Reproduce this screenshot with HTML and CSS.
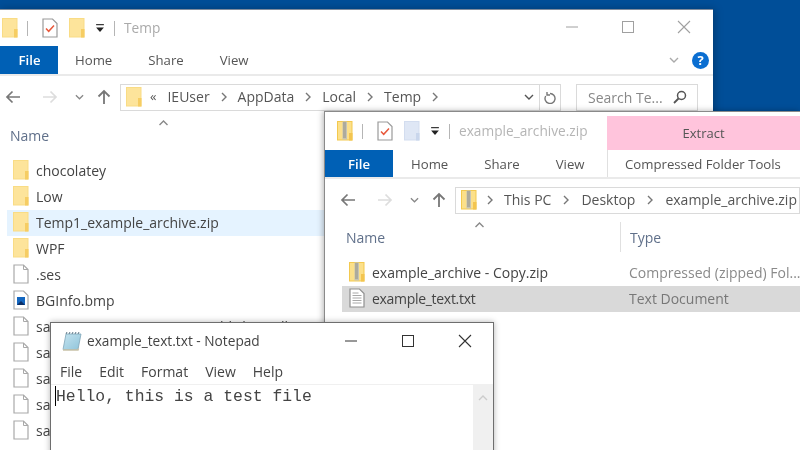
FILE: index.html
```html
<!DOCTYPE html>
<html lang="en">
<head>
<meta charset="utf-8">
<title>Temp</title>
<link rel="stylesheet" href="styles.css">
</head>
<body>
<svg class="defs" width="0" height="0" aria-hidden="true">
  <defs>
    <linearGradient id="pad-fill" x1="0" y1="0" x2="1" y2="1">
      <stop offset="0" stop-color="#c4e3ef"/>
      <stop offset="1" stop-color="#8fc4da"/>
    </linearGradient>
    <symbol id="folder" viewBox="0 0 16 20">
      <rect x="0.500" y="0.500" width="14.500" height="18.500" fill="#fde49b" stroke="#f9dc85"/>
      <rect x="12" y="11" width="3.500" height="8.500" fill="#f6cd63"/>
    </symbol>
    <symbol id="folder-blue" viewBox="0 0 16 20">
      <rect x="0.500" y="0.500" width="14.500" height="18.500" fill="#dfe7f5" stroke="#d3ddef"/>
      <rect x="12" y="12" width="3.500" height="7.500" fill="#c9d6ec"/>
    </symbol>
    <symbol id="zip" viewBox="0 0 16 20">
      <rect x="0.500" y="0.500" width="14.500" height="18.500" fill="#fce08a" stroke="#f3c94f"/>
      <rect x="5.500" y="0.500" width="4.500" height="18" fill="#c6c4b6"/>
      <path d="M6 2h3M6 4h3M6 6h3M6 8h3M6 10h3M6 12h3M6 14h3M6 16h3" stroke="#8e8d80" stroke-width="0.900"/>
      <rect x="12" y="12" width="3.500" height="7.500" fill="#f3c550"/>
    </symbol>
    <symbol id="page" viewBox="0 0 16 20">
      <path d="M1 1h9.500L15 5.500V19H1z" fill="#fff" stroke="#a9a9a9" stroke-width="1.200"/>
      <path d="M10.500 1v4.500H15" fill="none" stroke="#a9a9a9"/>
    </symbol>
    <symbol id="textfile" viewBox="0 0 16 20">
      <path d="M1 1h9.500L15 5.500V19H1z" fill="#fff" stroke="#8f8f8f" stroke-width="1.200"/>
      <path d="M3.500 5h6M3.500 7.500h9M3.500 10h9M3.500 12.500h9M3.500 15h9" stroke="#a8a8a8"/>
    </symbol>
    <symbol id="props" viewBox="0 0 16 20">
      <path d="M1 1h9.500L15 5.500V19H1z" fill="#fff" stroke="#9a9a9a" stroke-width="1.200"/>
      <path d="M4 10.500l2.700 2.800L12 7.500" fill="none" stroke="#e8593c" stroke-width="1.500"/>
    </symbol>
    <symbol id="bitmap" viewBox="0 0 16 20">
      <path d="M1 1h9.500L15 5.500V19H1z" fill="#fff" stroke="#a9a9a9" stroke-width="1.200"/>
      <rect x="4" y="7" width="8" height="8" fill="#1467c0"/>
      <path d="M4 15l4-4 4 4z" fill="#0c2f66"/>
    </symbol>
    <symbol id="back" viewBox="0 0 16 14">
      <path d="M15 7H2M7.500 1.500L2 7l5.500 5.500" fill="none" stroke="currentColor" stroke-width="1.700"/>
    </symbol>
    <symbol id="forward" viewBox="0 0 16 14">
      <path d="M1 7h13M8.500 1.500L14 7l-5.500 5.500" fill="none" stroke="currentColor" stroke-width="1.700"/>
    </symbol>
    <symbol id="up" viewBox="0 0 14 16">
      <path d="M7 15V2M1.500 7.500L7 2l5.500 5.500" fill="none" stroke="currentColor" stroke-width="1.800"/>
    </symbol>
    <symbol id="chev-down" viewBox="0 0 10 6">
      <path d="M1 1l4 4 4-4" fill="none" stroke="currentColor" stroke-width="1.400"/>
    </symbol>
    <symbol id="chev-right" viewBox="0 0 6 10">
      <path d="M1 1l4 4-4 4" fill="none" stroke="currentColor" stroke-width="1.400"/>
    </symbol>
    <symbol id="qat-drop" viewBox="0 0 9 9">
      <path d="M1 1.500h7" stroke="#222" stroke-width="1"/>
      <path d="M1 4h7L4.500 8z" fill="#222"/>
    </symbol>
    <symbol id="min" viewBox="0 0 14 14"><path d="M1 7h12" stroke="currentColor" stroke-width="1"/></symbol>
    <symbol id="max" viewBox="0 0 14 14"><rect x="1.500" y="1.500" width="11" height="11" fill="none" stroke="currentColor"/></symbol>
    <symbol id="close" viewBox="0 0 14 14"><path d="M1 1l12 12M13 1L1 13" stroke="currentColor" stroke-width="1.100"/></symbol>
    <symbol id="notepad" viewBox="0 0 20 20">
      <path d="M4 3h15l-3 15.500H1z" fill="url(#pad-fill)" stroke="#7fa5b8" stroke-width="0.800"/>
      <path d="M4 3l1-2M7 3l1-2M10 3l1-2M13 3l1-2M16 3l1-2" stroke="#5d7888"/>
      <path d="M1 19h15l.5-1.500" fill="none" stroke="#c9c2a8" stroke-width="1.500"/>
    </symbol>
  </defs>
</svg>

<main class="desktop">

  <section class="window explorer-back">
    <header class="titlebar">
      <div class="qat">
        <svg class="qat-icon"><use href="#folder"/></svg>
        <span class="qat-sep"></span>
        <svg class="qat-page"><use href="#props"/></svg>
        <svg class="qat-icon qat-gap"><use href="#folder"/></svg>
        <svg class="qat-drop"><use href="#qat-drop"/></svg>
        <span class="qat-sep"></span>
        <span class="win-title">Temp</span>
      </div>
      <div class="caption caption-dim">
        <svg><use href="#min"/></svg>
        <svg><use href="#max"/></svg>
        <svg><use href="#close"/></svg>
      </div>
    </header>
    <nav class="ribbon">
      <span class="tab-file">File</span>
      <span class="tab">Home</span>
      <span class="tab">Share</span>
      <span class="tab">View</span>
      <span class="ribbon-end">
        <svg class="ribbon-chev"><use href="#chev-down"/></svg>
        <span class="help">?</span>
      </span>
    </nav>
    <div class="navrow">
      <svg class="nav-back"><use href="#back"/></svg>
      <svg class="nav-forward"><use href="#forward"/></svg>
      <svg class="nav-recent"><use href="#chev-down"/></svg>
      <svg class="nav-up"><use href="#up"/></svg>
      <div class="addressbar addressbar-back">
        <svg class="addr-icon"><use href="#folder"/></svg>
        <span class="crumb-more">&#171;</span>
        <span class="crumb">IEUser</span><svg class="crumb-sep"><use href="#chev-right"/></svg>
        <span class="crumb">AppData</span><svg class="crumb-sep"><use href="#chev-right"/></svg>
        <span class="crumb">Local</span><svg class="crumb-sep"><use href="#chev-right"/></svg>
        <span class="crumb">Temp</span><svg class="crumb-sep"><use href="#chev-right"/></svg>
        <svg class="addr-drop"><use href="#chev-down"/></svg>
        <span class="refresh">
          <svg viewBox="0 0 14 14"><path d="M7 2.500a5 5 0 1 1-4.300 2.500M4 1v3h3" transform="translate(0 1)" fill="none" stroke="#777" stroke-width="1.400"/></svg>
        </span>
      </div>
      <div class="searchbox">
        <span>Search Te...</span>
        <svg viewBox="0 0 14 14"><circle cx="8.500" cy="5.500" r="4" fill="none" stroke="#555" stroke-width="1.500"/><path d="M5.500 8.500L1 13" stroke="#555" stroke-width="1.800"/></svg>
      </div>
    </div>
    <div class="listhead listhead-back">
      <svg class="sort-caret"><use href="#chev-down"/></svg>
      <span>Name</span>
    </div>
    <ul class="files">
      <li><svg class="ficon"><use href="#folder"/></svg>chocolatey</li>
      <li><svg class="ficon"><use href="#folder"/></svg>Low</li>
      <li class="is-selected"><svg class="ficon"><use href="#folder"/></svg>Temp1_example_archive.zip</li>
      <li><svg class="ficon"><use href="#folder"/></svg>WPF</li>
      <li><svg class="ficon"><use href="#page"/></svg>.ses</li>
      <li><svg class="ficon"><use href="#bitmap"/></svg>BGInfo.bmp</li>
      <li><svg class="ficon"><use href="#page"/></svg>sa0MSB-S6MJB0FLAA-0-a-Publisher.tell</li>
      <li><svg class="ficon"><use href="#page"/></svg>sa</li>
      <li><svg class="ficon"><use href="#page"/></svg>sa</li>
      <li><svg class="ficon"><use href="#page"/></svg>sa</li>
      <li><svg class="ficon"><use href="#page"/></svg>sa</li>
    </ul>
  </section>

  <section class="window explorer-front">
    <header class="titlebar-front">
      <div class="qat">
        <svg class="qat-icon"><use href="#zip"/></svg>
        <span class="qat-sep"></span>
        <svg class="qat-page"><use href="#props"/></svg>
        <svg class="qat-icon qat-gap"><use href="#folder-blue"/></svg>
        <svg class="qat-drop"><use href="#qat-drop"/></svg>
        <span class="qat-sep"></span>
        <span class="win-title win-title-front">example_archive.zip</span>
      </div>
      <div class="extract">Extract</div>
    </header>
    <nav class="ribbon ribbon-front">
      <span class="tab-file">File</span>
      <span class="tab">Home</span>
      <span class="tab">Share</span>
      <span class="tab">View</span>
      <span class="tool-tab">Compressed Folder Tools</span>
    </nav>
    <div class="navrow navrow-front">
      <svg class="nav-back"><use href="#back"/></svg>
      <svg class="nav-forward"><use href="#forward"/></svg>
      <svg class="nav-recent"><use href="#chev-down"/></svg>
      <svg class="nav-up"><use href="#up"/></svg>
      <div class="addressbar addressbar-front">
        <svg class="addr-icon"><use href="#zip"/></svg>
        <svg class="crumb-sep"><use href="#chev-right"/></svg>
        <span class="crumb">This PC</span><svg class="crumb-sep"><use href="#chev-right"/></svg>
        <span class="crumb">Desktop</span><svg class="crumb-sep"><use href="#chev-right"/></svg>
        <span class="crumb">example_archive.zip</span>
      </div>
    </div>
    <div class="listhead listhead-front">
      <svg class="sort-caret"><use href="#chev-down"/></svg>
      <span class="col-name">Name</span>
      <span class="col-type">Type</span>
    </div>
    <ul class="zipfiles">
      <li><span class="zipname"><svg class="ficon"><use href="#zip"/></svg>example_archive - Copy.zip</span><span class="ziptype">Compressed (zipped) Fol...</span></li>
      <li class="is-active"><span class="zipname"><svg class="ficon"><use href="#textfile"/></svg>example_text.txt</span><span class="ziptype">Text Document</span></li>
    </ul>
  </section>

  <section class="window notepad">
    <header class="np-title">
      <svg class="np-icon"><use href="#notepad"/></svg>
      <span class="np-name">example_text.txt - Notepad</span>
      <div class="caption caption-np">
        <svg><use href="#min"/></svg>
        <svg><use href="#max"/></svg>
        <svg><use href="#close"/></svg>
      </div>
    </header>
    <nav class="np-menu">
      <span>File</span><span>Edit</span><span>Format</span><span>View</span><span>Help</span>
    </nav>
    <div class="np-body">
      <div class="np-text"><span class="np-caret"></span>Hello, this is a test file</div>
      <div class="np-scroll"><svg><use href="#chev-down"/></svg></div>
    </div>
  </section>

</main>
</body>
</html>
```

FILE: styles.css
```css
* { box-sizing: border-box; }
html, body { margin: 0; padding: 0; }
body {
  width: 800px;
  height: 450px;
  overflow: hidden;
  font-family: "Open Sans", "Noto Sans", sans-serif;
  color: #444;
  background: #004e98;
}
.defs { position: absolute; }
svg { display: block; flex: none; }

.desktop {
  position: relative;
  width: 800px;
  height: 450px;
  overflow: hidden;
  background: #004e98;
  filter: blur(0.45px);
}
.window {
  position: absolute;
  background: #fff;
  display: flex;
  flex-direction: column;
}

/* back explorer */
.explorer-back {
  left: -1px;
  top: 9px;
  width: 714px;
  height: 450px;
  border-top: 1px solid #7f8b9c;
  box-shadow: 2px 0 8px rgba(0, 0, 0, 0.25);
}
.titlebar {
  height: 36px;
  display: flex;
  align-items: center;
  justify-content: space-between;
  padding-left: 3px;
}
.qat { display: flex; align-items: center; }
.qat-icon { width: 16px; height: 20px; }
.qat-sep { width: 1px; height: 15px; background: #b5b5b5; margin: 0 14px 0 9px; }
.qat-page { width: 16px; height: 20px; }
.qat-gap { margin-left: 11px; }
.qat-drop { width: 10px; height: 10px; margin-left: 10px; }
.qat-drop + .qat-sep { margin: 0 9px 0 9px; }
.win-title { font-size: 13.700px; color: #aaa; margin-top: -1px; }
.caption { display: flex; }
.caption svg { width: 14px; height: 14px; }
.caption-dim { color: #a0a0a0; gap: 42px; padding-right: 22px; margin-top: -2px; }

.ribbon {
  height: 30px;
  display: flex;
  align-items: stretch;
  border-bottom: 2px solid #eaeaea;
  font-size: 13.200px;
}
.tab-file {
  width: 59px;
  background: #0060b5;
  color: #fff;
  font-weight: 600;
  display: flex;
  align-items: center;
  justify-content: center;
  padding-left: 2px;
}
.tab { display: flex; align-items: center; color: #555; padding: 0 18px; }
.tab-file + .tab { padding-left: 17px; }
.ribbon-end { margin-left: auto; display: flex; align-items: center; gap: 13px; padding: 0 4px 0 0; }
.ribbon-chev { width: 10px; height: 6px; color: #aaa; }
.help {
  width: 17px;
  height: 17px;
  border-radius: 50%;
  background: #0a6ed1;
  color: #fff;
  font-size: 13px;
  font-weight: 700;
  line-height: 17px;
  text-align: center;
}

.navrow {
  height: 35px;
  display: flex;
  align-items: center;
  padding: 7px 0 0 6px;
  border-bottom: 0;
}
.nav-back { width: 16px; height: 14px; color: #777; }
.nav-forward { width: 16px; height: 14px; color: #ddd; margin-left: 21px; }
.nav-recent { width: 9px; height: 6px; color: #888; margin-left: 17px; }
.nav-up { width: 14px; height: 16px; color: #777; margin-left: 13px; }

.addressbar {
  height: 27px;
  display: flex;
  align-items: center;
  border: 1px solid #dadada;
  font-size: 14px;
  color: #555;
  background: #fff;
}
.addressbar-back { width: 441px; margin-left: 9px; padding-left: 5px; }
.addr-icon { width: 16px; height: 20px; }
.crumb-more { margin: -3px 11px 0 8px; font-size: 13px; }
.crumb { line-height: 1; }
.crumb-sep { width: 6px; height: 10px; color: #777; margin: 0 11px; }
.addr-drop { width: 10px; height: 6px; color: #555; margin-left: auto; margin-right: 5px; }
.refresh {
  width: 21px;
  height: 100%;
  border-left: 1px solid #dadada;
  display: flex;
  align-items: center;
  justify-content: center;
}
.refresh svg { width: 14px; height: 14px; }
.searchbox {
  width: 122px;
  height: 27px;
  margin-left: 15px;
  display: flex;
  align-items: center;
  justify-content: space-between;
  border: 1px solid #dadada;
  padding: 0 10px 0 11px;
  font-size: 14px;
  color: #888;
}
.searchbox svg { width: 14px; height: 14px; }

.listhead { position: relative; font-size: 14px; color: #60708a; display: flex; }
.listhead-back { height: 34px; align-items: flex-end; padding-left: 11px; }
.sort-caret {
  position: absolute;
  width: 11px;
  height: 6px;
  color: #888;
  transform: rotate(180deg);
}
.listhead-back .sort-caret { left: 159px; top: 9px; }

.files {
  list-style: none;
  margin: 13px 0 0;
  padding: 0 0 0 8px;
  font-size: 14px;
  color: #444;
}
.files li {
  height: 26px;
  display: flex;
  align-items: center;
  padding: 0 0 2px 6px;
  white-space: nowrap;
}
.files li.is-selected { background: #e5f3ff; }
.ficon { width: 16px; height: 20px; margin-right: 7px; }

/* front explorer */
.explorer-front {
  left: 324px;
  top: 111px;
  width: 476px;
  height: 350px;
  border-left: 1px solid #8a8a8a;
  border-top: 1px solid #8a8a8a;
  box-shadow: -1px 0 6px rgba(0, 0, 0, 0.3);
}
.titlebar-front {
  height: 38px;
  flex: none;
  display: flex;
  justify-content: space-between;
  padding-left: 12px;
}
.titlebar-front .qat { height: 38px; }
.win-title-front { font-size: 13.700px; color: #b5b5b5; }
.extract {
  width: 193px;
  margin-top: 4px;
  background: #ffc4dc;
  color: #555;
  font-size: 13px;
  display: flex;
  align-items: center;
  justify-content: center;
}
.ribbon-front { flex: none; height: 29px; }
.ribbon-front .tab-file { width: 68px; padding-left: 0; }
.ribbon-front .tab { padding: 0 18px; }
.ribbon-front .tab-file + .tab { padding-left: 18px; }
.tool-tab {
  margin-left: auto;
  width: 193px;
  flex: none;
  display: flex;
  align-items: center;
  border-left: 1px solid #e0e0e0;
  padding-left: 17px;
  color: #555;
  white-space: nowrap;
}
.navrow-front { flex: none; height: 35px; padding-left: 15px; }
.addressbar-front { flex: 1; margin-left: 9px; padding-left: 5px; }
.addressbar-front .crumb-sep { margin: 0 12px; }
.addressbar-front .addr-icon + .crumb-sep { margin: 0 11px 0 10px; }
.listhead-front { height: 40px; flex: none; align-items: flex-end; padding: 0 0 7px 21px; }
.listhead-front .sort-caret { left: 149px; top: 8px; }
.col-name { width: 274px; }
.col-type {
  border-left: 1px solid #e0e0e0;
  padding-left: 9px;
  height: 30px;
  line-height: 31px;
  margin-bottom: -5px;
}

.zipfiles { list-style: none; margin: 6px 0 0; padding: 0 0 0 17px; font-size: 14px; }
.zipfiles li { height: 26px; display: flex; align-items: center; padding-bottom: 2px; white-space: nowrap; }
.zipfiles li.is-active { background: #d9d9d9; }
.zipname { width: 287px; flex: none; display: flex; align-items: center; padding-left: 7px; }
.is-active .zipname { letter-spacing: -0.300px; }
.ziptype { color: #8a8a8a; font-size: 14px; }
.is-active .ziptype { color: #777; }

/* notepad */
.notepad {
  left: 50px;
  top: 322px;
  width: 444px;
  height: 140px;
  border: 1px solid #6e6e6e;
  box-shadow: 0 0 6px rgba(0, 0, 0, 0.3);
}
.np-title { height: 35px; display: flex; align-items: center; padding-left: 11px; flex: none; }
.np-icon { width: 20px; height: 20px; }
.np-name { font-size: 13.700px; color: #444; margin-left: 5px; }
.caption-np { margin-left: auto; color: #333; gap: 43px; padding-right: 21px; }
.np-menu {
  height: 26px;
  flex: none;
  display: flex;
  gap: 17px;
  align-items: center;
  padding: 0 0 0 9px;
  font-size: 14px;
  color: #444;
}
.np-body { flex: 1; display: flex; background: #f0f0f0; padding-top: 1px; }
.np-text {
  position: relative;
  flex: 1;
  background: #fff;
  padding: 2px 0 0 5px;
  font-family: "Liberation Mono", monospace;
  font-size: 16.400px;
  line-height: 20px;
  color: #444;
  white-space: pre;
}
.np-caret { position: absolute; left: 4px; top: 1px; width: 1px; height: 20px; background: #000; }
.np-scroll { width: 20px; display: flex; justify-content: center; padding-top: 10px; }
.np-scroll svg { width: 10px; height: 6px; color: #ccc; transform: rotate(180deg); }
```
